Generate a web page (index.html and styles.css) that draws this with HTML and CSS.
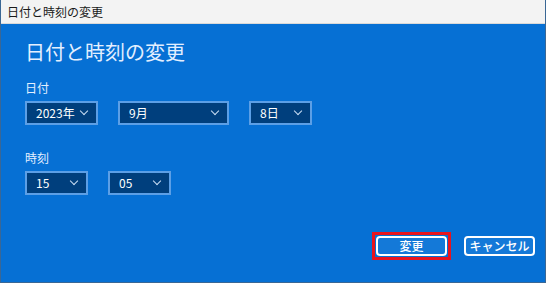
FILE: index.html
```html
<!DOCTYPE html>
<html lang="ja">
<head>
  <meta charset="UTF-8" />
  <title>日付と時刻の変更</title>
  <link rel="stylesheet" href="styles.css">
</head>
<body>
  <div class="window">
    <div class="titlebar">日付と時刻の変更</div>

    <div class="content">
      <h1>日付と時刻の変更</h1>

      <div class="label">日付</div>
      <div class="row">
        <div class="select w-year">2023年<span class="chev"></span></div>
        <div class="select w-month">9月<span class="chev"></span></div>
        <div class="select w-small">8日<span class="chev"></span></div>
      </div>

      <div class="label label-time">時刻</div>
      <div class="row">
        <div class="select w-small">15<span class="chev"></span></div>
        <div class="select w-small">05<span class="chev"></span></div>
      </div>

      <div class="buttons">
        <span class="highlight"><button class="button">変更</button></span>
        <button class="button">キャンセル</button>
      </div>
    </div>
  </div>
</body>
</html>
```

FILE: styles.css
```css
html, body {
  margin: 0;
  padding: 0;
}
body {
  font-family: "Noto Sans CJK JP", "Noto Sans", sans-serif;
  width: 546px;
  height: 283px;
  overflow: hidden;
}
.window {
  box-sizing: border-box;
  width: 546px;
  height: 283px;
  border: 1px solid #3a6795;
  border-top: none;
  display: flex;
  flex-direction: column;
  background: #0670d4;
}
.titlebar {
  height: 24px;
  line-height: 24px;
  background: #f3f3f3;
  color: #1a1a1a;
  font-size: 12px;
  padding-left: 6px;
  border-bottom: 1px solid #d9d9d9;
  box-sizing: border-box;
}
.content {
  flex: 1;
  padding: 14px 0 0 24px;
  color: #e3efff;
  display: flex;
  flex-direction: column;
}
h1 {
  margin: 0;
  font-size: 20px;
  font-weight: normal;
  line-height: 28px;
  height: 28px;
}
.label {
  margin-top: 14px;
  font-size: 12px;
  line-height: 16px;
  height: 16px;
}
.label-time {
  margin-top: 25px;
}
.row {
  display: flex;
  gap: 20px;
  margin-top: 5px;
}
.select {
  box-sizing: border-box;
  height: 24px;
  border: 2px solid #5c9fe6;
  background: #003f7d;
  color: #ffffff;
  font-size: 12px;
  line-height: 20px;
  padding-left: 9px;
  display: flex;
  align-items: center;
  justify-content: space-between;
  padding-right: 9px;
}
.w-year {
  width: 73px;
}
.w-month {
  width: 111px;
}
.w-small {
  width: 63px;
}
.chev {
  width: 5px;
  height: 5px;
  border-right: 1px solid #c9ddf3;
  border-bottom: 1px solid #c9ddf3;
  transform: rotate(45deg);
  margin-top: -4px;
}
.buttons {
  margin-top: auto;
  margin-bottom: 22px;
  margin-right: 10px;
  display: flex;
  justify-content: flex-end;
  align-items: center;
  gap: 13px;
}
.button {
  box-sizing: border-box;
  width: 71px;
  height: 20px;
  border: 2px solid #ffffff;
  border-radius: 4px;
  background: #1479d8;
  color: #ffffff;
  font-family: "Noto Sans CJK JP", sans-serif;
  font-size: 12px;
  font-weight: 500;
  padding: 0;
  line-height: 16px;
}
.highlight {
  display: flex;
  border: 3px solid #e8141e;
  padding: 1px;
}
```
